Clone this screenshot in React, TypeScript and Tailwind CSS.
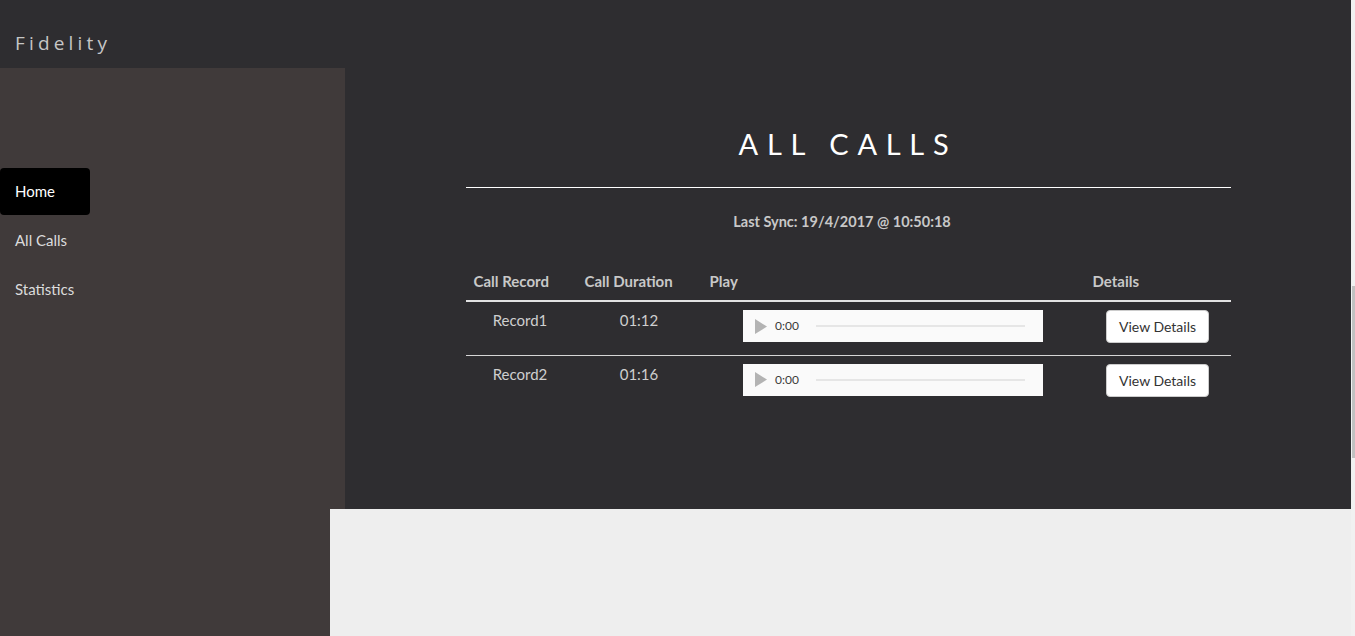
const calls = [
  { record: "Record1", duration: "01:12" },
  { record: "Record2", duration: "01:16" },
];

const navItems = ["Home", "All Calls", "Statistics"];

function FakeAudio() {
  return (
    <div className="flex h-[32px] w-[300px] items-center bg-[#fafafa] pl-[12px]">
      <svg width="12" height="15" viewBox="0 0 12 15" className="shrink-0">
        <path d="M0 0 L12 7.5 L0 15 Z" fill="#b3b3b3" />
      </svg>
      <span className="ml-[8px] text-[12px] leading-none text-[#3a3a3a]">0:00</span>
      <div className="ml-[17px] h-[2px] w-[209px] bg-[#e6e6e6]" />
    </div>
  );
}

export default function App() {
  return (
    <div className="flex h-[636px] w-full font-['Lato',sans-serif]">
      <div className="flex flex-1 flex-col">
        <div className="flex h-[509px]">
          <aside className="flex w-[345px] flex-col">
            <div className="flex h-[68px] items-center bg-[#2e2d30] px-[15px] pt-[18px]">
              <span className="font-['Open_Sans',sans-serif] text-[19px] tracking-[0.22em] text-[#c6c6c6]">
                Fidelity
              </span>
            </div>
            <nav className="flex flex-1 flex-col gap-[2px] bg-[#403a3a] pt-[100px]">
              {navItems.map((item, idx) => (
                <a
                  key={item}
                  className={
                    idx === 0
                      ? "flex h-[47px] w-[90px] items-center rounded-[4px] bg-black px-[15px] text-[15px] text-white"
                      : "flex h-[47px] w-[90px] items-center px-[15px] text-[15px] text-[#dcdcdc]"
                  }
                >
                  {item}
                </a>
              ))}
            </nav>
          </aside>

          <main className="flex-1 bg-[#2e2d30] pt-[126px]">
            <div className="mx-auto w-[765px]">
              <h1 className="text-center text-[29px] leading-[36px] tracking-[0.3em] text-white">
                ALL CALLS
              </h1>
              <hr className="mt-[25px] border-0 border-t border-white" />
              <p className="mt-[24px] pr-[12px] text-center text-[14.5px] font-bold leading-[20px] text-[#c8c8c8]">
                Last Sync: 19/4/2017 @ 10:50:18
              </p>

              <table className="mt-[30px] w-full table-fixed border-collapse">
                <colgroup>
                  <col className="w-[111px]" />
                  <col className="w-[125px]" />
                  <col className="w-[383px]" />
                  <col className="w-[146px]" />
                </colgroup>
                <thead>
                  <tr className="border-b-2 border-[#e2e2e2]">
                    {["Call Record", "Call Duration", "Play", "Details"].map((h) => (
                      <th
                        key={h}
                        className="px-[8px] py-[9px] text-left text-[15px] font-bold leading-[20px] text-[#c8c8c8]"
                      >
                        {h}
                      </th>
                    ))}
                  </tr>
                </thead>
                <tbody>
                  {calls.map((c, idx) => (
                    <tr
                      key={c.record}
                      className={idx === 0 ? "h-[54px] border-b border-[#d6d6d6]" : "h-[54px]"}
                    >
                      <td className="pr-[2px] pt-[8px] text-center align-top text-[15px] leading-[20px] text-[#cfcfcf]">
                        {c.record}
                      </td>
                      <td className="pt-[8px] text-center align-top text-[15px] leading-[20px] text-[#cfcfcf]">
                        {c.duration}
                      </td>
                      <td className="pt-[8px] align-top">
                        <div className="flex justify-center">
                          <FakeAudio />
                        </div>
                      </td>
                      <td className="pt-[8px] align-top">
                        <div className="flex justify-center">
                          <button className="h-[33px] w-[103px] rounded-[4px] border border-[#cccccc] bg-white text-[14px] text-[#333333]">
                            View Details
                          </button>
                        </div>
                      </td>
                    </tr>
                  ))}
                </tbody>
              </table>
            </div>
          </main>
        </div>

        <div className="flex flex-1">
          <div className="w-[330px] bg-[#403a3a]" />
          <div className="flex-1 bg-[#eeeeee]" />
        </div>
      </div>

      <div className="flex w-[4px] flex-col bg-[#f1f1f1] pl-[1px] pt-[286px]">
        <div className="h-[172px] bg-[#c1c1c1]" />
      </div>
    </div>
  );
}
